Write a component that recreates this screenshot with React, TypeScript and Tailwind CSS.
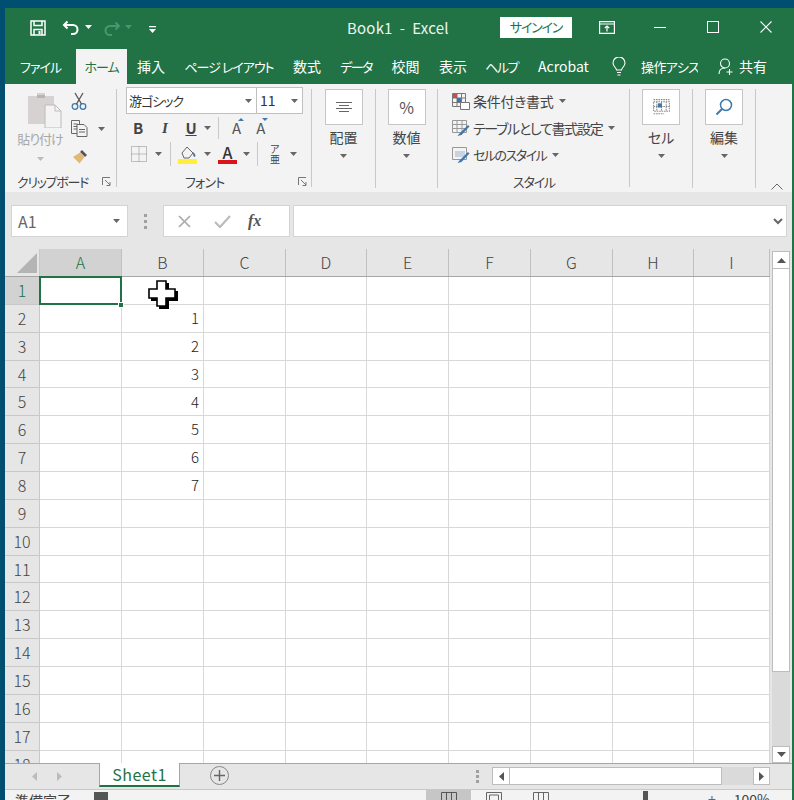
import React from "react";

const jp = { fontFamily: '"Noto Sans CJK JP", "Noto Sans", sans-serif' };

function Caret({ className = "mx-auto", color = "#666" }: { className?: string; color?: string }) {
  return (
    <svg width="7" height="4" viewBox="0 0 7 4" className={className}>
      <path d="M0 0h7L3.500 4z" fill={color} />
    </svg>
  );
}

function Launcher() {
  return (
    <svg width="9" height="9" viewBox="0 0 9 9" fill="none" stroke="#777" strokeWidth="1">
      <path d="M.5 8V.5H8M3 3l5 5M8 5v3.500H4.500" />
    </svg>
  );
}

function LargeButton({ label, icon, w }: { label: string; icon: React.ReactNode; w: string }) {
  return (
    <div className={`${w} shrink-0 border-r border-[#c8c8c8] my-[5px] flex flex-col items-center h-[99px]`}>
      <div className="w-[38px] h-[36px] bg-white border border-[#c6c6c6] flex items-center justify-center">{icon}</div>
      <div className="mt-[2px] text-[14px] leading-[20px] text-[#444]">{label}</div>
      <Caret className="mt-[7px]" />
    </div>
  );
}

function StyleRow({ icon, label, mt, text }: { icon: React.ReactNode; label: string; mt: string; text: string }) {
  return (
    <div className={`flex items-center h-[20px] ${mt}`}>
      <div className="w-[21px] shrink-0">{icon}</div>
      <span className={`${text} text-[#444] whitespace-nowrap`}>{label}</span>
      <Caret className="ml-[6px]" />
    </div>
  );
}

const tabs = [
  ["ファイル", "w-[71px]", "text-[13px] tracking-[-1px]"],
  ["ホーム", "w-[51px]", "text-[13px] tracking-[-1px]"],
  ["挿入", "w-[48px]", "text-[14px]"],
  ["ページ レイアウト", "w-[108px]", "text-[13px] tracking-[-1px]"],
  ["数式", "w-[48px]", "text-[14px]"],
  ["データ", "w-[50px]", "text-[13px] tracking-[-1.5px]"],
  ["校閲", "w-[49px]", "text-[14px]"],
  ["表示", "w-[46px]", "text-[14px]"],
  ["ヘルプ", "w-[51px]", "text-[13px] tracking-[-1.5px]"],
  ["Acrobat", "w-[73px]", "text-[14px]"],
];

const cols = [
  ["A", "w-[82px]"],
  ["B", "w-[82px]"],
  ["C", "w-[82px]"],
  ["D", "w-[81px]"],
  ["E", "w-[82px]"],
  ["F", "w-[82px]"],
  ["G", "w-[82px]"],
  ["H", "w-[81px]"],
  ["I", "w-[76px]"],
];

const rows = Array.from({ length: 18 }, (_, i) => i + 1);

function GridTable() {
  return (
    <div className="relative flex-1 min-w-0 overflow-hidden">
      <div className="flex h-[27px] bg-[#e6e6e6]">
        <div className="w-[35px] shrink-0 relative border-r border-[#c8c8c8]">
          <svg width="20" height="20" viewBox="0 0 20 20" className="absolute right-[2px] bottom-[3px]">
            <path d="M20 0v20H0z" fill="#b4b4b4" />
          </svg>
        </div>
        {cols.map(([c, w], i) => (
          <div
            key={c}
            className={`${w} shrink-0 flex items-center justify-center pb-[1px] text-[16px] font-light border-r border-[#c0c0c0] ${i === 0 ? "bg-[#d2d2d2] text-[#217346]" : "text-[#444]"}`}
          >
            {c}
          </div>
        ))}
      </div>
      <div className="h-px w-[765px] bg-[#a6a6a6]" />
      {rows.map((r) => (
        <div key={r} className="flex h-[27.86px]">
          <div
            className={`w-[35px] shrink-0 flex items-center justify-center pb-[1px] text-[16px] font-light border-r border-b border-[#c8c8c8] ${r === 1 ? "bg-[#d2d2d2] text-[#217346]" : "bg-[#e6e6e6] text-[#444]"}`}
          >
            {r}
          </div>
          {cols.map(([c, w]) => (
            <div
              key={c}
              className={`${w} shrink-0 bg-white border-r border-b border-[#d8d8d8] flex items-center justify-end pr-[4px] text-[15px] font-light text-[#222]`}
            >
              {c === "B" && r >= 2 && r <= 8 ? r - 1 : ""}
            </div>
          ))}
        </div>
      ))}
      {/* selection box */}
      <div className="absolute left-[34px] top-[27px] w-[83px] h-[29px] border-2 border-[#217346]" />
      <div className="absolute left-[113px] top-[53px] w-[6px] h-[6px] bg-[#217346] border border-white" />
      {/* cursor */}
      <svg width="32" height="32" viewBox="0 0 32 32" className="absolute left-[143px] top-[30px]">
        <path d="M9 2h10v8h9v10h-9v8H9v-8H1V10h8z" transform="translate(2 2)" fill="#000" />
        <path d="M9 2h9v8h9v9h-9v8H9v-8H1v-9h8z" fill="#fff" stroke="#000" strokeWidth="1.600" />
      </svg>
    </div>
  );
}

function VScroll() {
  return (
    <div className="w-[18px] mr-[2px] shrink-0 flex flex-col pt-[2px]">
      <div className="h-[18px] bg-white border border-[#bdbdbd] flex items-center justify-center">
        <svg width="9" height="5" viewBox="0 0 9 5"><path d="M0 5h9L4.500 0z" fill="#555" /></svg>
      </div>
      <div className="h-[403px] bg-white border-x border-b border-[#bdbdbd]" />
      <div className="flex-1 bg-[#dadada]" />
      <div className="h-[17px] bg-white border border-[#bdbdbd] flex items-center justify-center">
        <svg width="9" height="5" viewBox="0 0 9 5"><path d="M0 0h9L4.500 5z" fill="#555" /></svg>
      </div>
    </div>
  );
}

export default function App() {
  return (
    <div style={jp} className="w-[794px] h-[800px] overflow-hidden bg-[#004e70] pt-[8px] pl-[5px] flex flex-col [font-feature-settings:'palt']">
      <div className="flex-1 min-h-0 flex flex-col border-r-2 border-[#217346]">
        {/* Title bar */}
        <div className="h-[41px] shrink-0 bg-[#217346] flex items-center text-white">
          <svg width="16" height="16" viewBox="0 0 16 16" fill="none" stroke="#fff" strokeWidth="1.500" className="ml-[25px] -mt-[2px]">
            <path d="M1 1h14v14H1zM4 1v4.500h8V1M4 15V9.500h8V15" />
            <path d="M8.500 11h2v3h-2z" fill="#fff" stroke="none" />
          </svg>
          <svg width="18" height="16" viewBox="0 0 18 16" fill="none" stroke="#fff" strokeWidth="2" className="ml-[16px] -mt-[1px]">
            <path d="M5.500 1.500 2 5l3.500 3.500M2 5h9a4.500 4.500 0 0 1 0 9H9" />
          </svg>
          <Caret className="ml-[5px] -mt-[3px]" color="#fff" />
          <svg width="18" height="16" viewBox="0 0 18 16" fill="none" stroke="#4a9670" strokeWidth="2" className="ml-[11px]">
            <path d="M12.500 1.500 16 5l-3.500 3.500M16 5H7a4.500 4.500 0 0 0 0 9h2" />
          </svg>
          <Caret className="ml-[4px] -mt-[3px]" color="#4a9670" />
          <svg width="7" height="8" viewBox="0 0 7 8" className="ml-[17px] mt-[2px]">
            <path d="M0 0h7v1.200H0zM0 3h7L3.500 7z" fill="#fff" />
          </svg>
          <div className="ml-[191px] w-[153px] shrink-0 text-[15px] tracking-[0.2px] whitespace-pre text-[#eef5f0]">Book1  -  Excel</div>
          <div className="w-[72px] h-[21px] bg-white text-[#217346] text-[13px] tracking-[-1.2px] flex items-center justify-center -mt-[3px]">サインイン</div>
          <svg width="16" height="13" viewBox="0 0 16 13" fill="none" stroke="#fff" strokeWidth="1.200" className="ml-[27px] -mt-[3px]">
            <path d="M.6.600h14.800v11.800H.6zM.6 3h14.800M8 10.500V5M5.800 7 8 5l2.200 2" />
          </svg>
          <div className="ml-[39px] w-[12px] h-px bg-white -mt-[2px]" />
          <div className="ml-[41px] w-[12px] h-[12px] border border-white -mt-[4px]" />
          <svg width="12" height="12" viewBox="0 0 12 12" stroke="#fff" strokeWidth="1.100" className="ml-[41px] -mt-[4px]">
            <path d="M.5.500l11 11M11.500.500l-11 11" />
          </svg>
        </div>

        {/* Tabs */}
        <div className="h-[35px] shrink-0 bg-[#217346] flex text-[14px] text-white">
          {tabs.map(([t, w, s], i) => (
            <div
              key={t}
              className={`${w} ${s} shrink-0 flex items-center justify-center whitespace-nowrap ${i === 1 ? "bg-[#f3f3f3] text-[#217346]" : ""}`}
            >
              {t}
            </div>
          ))}
          <div className="flex items-center">
            <svg width="16" height="19" viewBox="0 0 16 19" fill="none" stroke="#fff" strokeWidth="1.100" className="ml-[11px]">
              <path d="M5.500 13c0-2-3.500-3.500-3.500-7a6 6 0 0 1 12 0c0 3.500-3.500 5-3.500 7zM6 15.500h4M6.500 18h3" />
            </svg>
            <div className="ml-[14px] w-[57px] overflow-hidden whitespace-nowrap text-[13px] tracking-[-0.6px]">操作アシスト</div>
            <svg width="16" height="18" viewBox="0 0 16 18" fill="none" stroke="#fff" strokeWidth="1.100" className="ml-[20px]">
              <circle cx="7" cy="5.500" r="4.500" />
              <path d="M1 16c0-4 2.500-6 6-6M11.500 11v6M8.500 14h6" />
            </svg>
            <span className="ml-[5px]">共有</span>
          </div>
        </div>

        {/* Ribbon */}
        <div className="h-[108px] shrink-0 bg-[#f3f3f3] flex relative text-[#444]">
          {/* Clipboard */}
          <div className="w-[112px] shrink-0 border-r border-[#c8c8c8] my-[5px] relative flex">
            <div className="w-[66px] shrink-0 flex flex-col items-center">
              <svg width="34" height="36" viewBox="0 0 34 36" className="mt-[3px] ml-[14px]">
                <path d="M0 4h9V1h8v3h9v28H0z" fill="#d6d2d2" />
                <path d="M9 3h8v3H9z" fill="#b8b4b4" />
                <path d="M17 13h10l6 6v17H17z" fill="#f3f3f3" stroke="#bdbaba" />
                <path d="M27 13v6h6" fill="none" stroke="#bdbaba" />
              </svg>
              <div className="mt-[1px] ml-[4px] text-[13px] tracking-[-1px] leading-[20px] text-[#a8a8a8] whitespace-nowrap">貼り付け</div>
              <Caret className="mt-[8px] ml-[4px]" color="#bbb" />
            </div>
            <div className="flex flex-col">
              <svg width="16" height="18" viewBox="0 0 16 18" fill="none" stroke="#3f78ab" strokeWidth="1.300" className="mt-[3px]">
                <circle cx="4" cy="14.500" r="2.800" />
                <circle cx="12" cy="14.500" r="2.800" />
                <path d="M5.500 12 12 1M10.500 12 4 1" stroke="#555" />
              </svg>
              <div className="flex items-center mt-[10px]">
                <svg width="17" height="17" viewBox="0 0 17 17" fill="none" stroke="#666" strokeWidth="1">
                  <path d="M.5.500h8v13h-8zM2.500 4h4M2.500 6.500h4M2.500 9h4" />
                  <path d="M6 4.500h7l3 3v9H6z" fill="#f3f3f3" />
                  <path d="M8 9.500h6M8 12h6" />
                </svg>
                <Caret className="ml-[10px]" />
              </div>
              <svg width="17" height="17" viewBox="0 0 17 17" className="mt-[11px] ml-[1px]">
                <path d="M10 2l5 5-2 2-5-5z" fill="#555" />
                <path d="M8 4.500l4.500 4.500-5 6.500L1 9z" fill="#e2b877" />
              </svg>
            </div>
            <div className="absolute left-[12px] bottom-[-4px] text-[13px] tracking-[-1.3px] leading-[18px] whitespace-nowrap">クリップボード</div>
            <div className="absolute right-[5px] bottom-[1px]"><Launcher /></div>
          </div>

          {/* Font */}
          <div className="w-[195px] shrink-0 border-r border-[#c8c8c8] my-[5px] relative pl-[9px]">
            <div className="flex -mt-[2px] h-[27px]">
              <div className="w-[131px] bg-white border border-[#c0c0c0] flex items-center justify-between pl-[2px] pr-[4px] text-[13px] tracking-[-1px] text-[#333]">
                游ゴシック<Caret className="" />
              </div>
              <div className="w-[46px] bg-white border border-l-0 border-[#c0c0c0] flex items-center justify-between pl-[3px] pr-[4px] text-[14px] text-[#333]">
                11<Caret className="" />
              </div>
            </div>
            <div className="flex items-center h-[26px] mt-[1px] font-bold text-[15px]">
              <span className="w-[14px] ml-[5px] text-center">B</span>
              <span className="w-[14px] ml-[13px] text-center italic" style={{ fontFamily: '"Liberation Serif", serif' }}>I</span>
              <span className="w-[14px] ml-[12px] text-center underline">U</span>
              <Caret className="ml-[6px]" />
              <div className="w-px h-[22px] bg-[#c8c8c8] ml-[7px]" />
              <span className="ml-[13px] text-[15px] font-normal text-[#555] relative">A<svg width="6" height="3" viewBox="0 0 6 3" className="absolute top-[1px] -right-[3px]"><path d="M0 3h6L3 0z" fill="#3f78ab" /></svg></span>
              <span className="ml-[15px] text-[15px] font-normal text-[#555] relative">A<svg width="6" height="3" viewBox="0 0 6 3" className="absolute top-[1px] -right-[3px]"><path d="M0 0h6L3 3z" fill="#3f78ab" /></svg></span>
            </div>
            <div className="flex items-center h-[26px]">
              <svg width="16" height="16" viewBox="0 0 16 16" fill="none" stroke="#888" strokeDasharray="1 1" className="ml-[5px]">
                <path d="M.5.500h15v15H.5zM8 .5v15M.5 8h15" />
              </svg>
              <Caret className="ml-[8px]" />
              <div className="w-px h-[24px] bg-[#c8c8c8] ml-[8px]" />
              <svg width="20" height="20" viewBox="0 0 20 20" className="ml-[7px]">
                <path d="M4 9 9 3l6 6-4 5H6z" fill="none" stroke="#666" />
                <path d="M15 8c2 2 3 3 2 5-2 0-2-3-2-5z" fill="#3f78ab" />
                <rect x="0" y="15" width="19" height="5" fill="#ffef3a" />
              </svg>
              <Caret className="ml-[6px]" />
              <div className="ml-[7px] w-[19px] flex flex-col items-center">
                <span className="text-[16px] leading-[15px] font-medium text-[#333]">A</span>
                <div className="w-[19px] h-[4px] bg-[#d9151b]" />
              </div>
              <Caret className="ml-[6px]" />
              <div className="w-px h-[24px] bg-[#c8c8c8] ml-[7px]" />
              <span className="ml-[12px] text-[10px] leading-[10px] w-[9px] text-center">ア亜</span>
              <Caret className="ml-[11px]" />
            </div>
            <div className="absolute left-[68px] bottom-[-4px] text-[13px] tracking-[-0.8px] leading-[18px]">フォント</div>
            <div className="absolute right-[4px] bottom-[1px]"><Launcher /></div>
          </div>

          <LargeButton
            w="w-[64px]"
            label="配置"
            icon={
              <svg width="16" height="10" viewBox="0 0 16 10" stroke="#666"><path d="M0 .5h16M3 3.500h10M0 6.500h16M3 9.500h10" /></svg>
            }
          />
          <LargeButton w="w-[62px]" label="数値" icon={<span className="text-[16px] text-[#555]">%</span>} />

          {/* Styles */}
          <div className="w-[192px] shrink-0 border-r border-[#c8c8c8] my-[5px] pl-[14px] relative">
            <StyleRow
              mt="mt-[2px]"
              text="text-[14px] tracking-[-0.3px]"
              label="条件付き書式"
              icon={
                <svg width="18" height="17" viewBox="0 0 18 17" fill="none" stroke="#777">
                  <path d="M.5.500h13v13H.5zM.5 5h13M.5 9.500h13M5 .5v13M9.500 .5v13" />
                  <path d="M1 1h4v4H1z" fill="#c0504d" stroke="none" />
                  <path d="M5 5h4v4H5z" fill="#4472a8" stroke="none" />
                  <path d="M8.500 9.500h9v7h-9z" fill="#fff" />
                </svg>
              }
            />
            <StyleRow
              mt="mt-[7px]"
              text="text-[14px] tracking-[-1.3px]"
              label="テーブルとして書式設定"
              icon={
                <svg width="18" height="17" viewBox="0 0 18 17" fill="none" stroke="#999">
                  <path d="M.5.500h14v12H.5zM.5 4.500h14M.5 8.500h14M5 .5v12M10 .5v12" />
                  <path d="M7 14 16 5l1.500 1.500-8 8.500-4 1z" fill="#3f78ab" stroke="none" />
                </svg>
              }
            />
            <StyleRow
              mt="mt-[7px]"
              text="text-[13px] tracking-[-1.5px]"
              label="セルのスタイル"
              icon={
                <svg width="18" height="17" viewBox="0 0 18 17" fill="none" stroke="#999">
                  <path d="M.5.500h14v12H.5z" />
                  <path d="M3 4h10v6H3z" fill="#c7d3e3" stroke="none" />
                  <path d="M7 14 16 5l1.500 1.500-8 8.500-4 1z" fill="#3f78ab" stroke="none" />
                </svg>
              }
            />
            <div className="absolute left-[75px] bottom-[-4px] text-[13px] tracking-[-1.200px] leading-[18px]">スタイル</div>
          </div>

          <LargeButton
            w="w-[63px]"
            label="セル"
            icon={
              <svg width="19" height="20" viewBox="0 0 17 19" fill="none" stroke="#888">
                <path d="M1 2.500h15M1 4.500h15v9H1zM4 4.500v9M8.500 4.500v9M13 4.500v9M1 9h15M1 16h10" strokeDasharray="1.500 .8" />
                <path d="M5 6h4v4H5z" fill="#3f78ab" stroke="none" />
              </svg>
            }
          />
          <LargeButton
            w="w-[63px]"
            label="編集"
            icon={
              <svg width="18" height="18" viewBox="0 0 18 18" fill="none">
                <circle cx="11" cy="7" r="5.500" stroke="#3f78ab" strokeWidth="1.500" />
                <path d="M7 11 1.500 16.500" stroke="#3f78ab" strokeWidth="2" />
              </svg>
            }
          />
          <svg width="12" height="7" viewBox="0 0 12 7" fill="none" stroke="#666" className="absolute right-[9px] bottom-[2px]">
            <path d="M.5 6.500 6 1l5.500 5.500" />
          </svg>
        </div>

        {/* Formula bar */}
        <div className="h-[57px] shrink-0 bg-[#e6e6e6] flex pt-[13px] pb-[12px] pl-[6px]">
          <div className="w-[117px] shrink-0 bg-white border border-[#d4d4d4] flex items-center justify-between pl-[6px] pr-[7px] text-[16px] text-[#666]">
            A1<Caret className="" />
          </div>
          <div className="w-[35px] shrink-0 flex flex-col items-center justify-center gap-[3px]">
            <i className="w-[3px] h-[3px] bg-[#a0a0a0]" />
            <i className="w-[3px] h-[3px] bg-[#a0a0a0]" />
            <i className="w-[3px] h-[3px] bg-[#a0a0a0]" />
          </div>
          <div className="w-[127px] shrink-0 bg-white border border-[#d4d4d4] flex items-center">
            <svg width="13" height="13" viewBox="0 0 13 13" stroke="#aaa" strokeWidth="1.700" className="ml-[14px]"><path d="M1 1l11 11M12 1 1 12" /></svg>
            <svg width="17" height="13" viewBox="0 0 17 13" fill="none" stroke="#bbb" strokeWidth="2.200" className="ml-[23px]"><path d="M1 7l5 5L16 1" /></svg>
            <span className="ml-[17px] text-[#555] italic font-bold text-[16px]" style={{ fontFamily: '"Liberation Serif", serif' }}>fx</span>
          </div>
          <div className="ml-[3px] w-[494px] shrink-0 bg-white border border-[#d4d4d4] flex items-center justify-end pr-[3px]">
            <svg width="10" height="7" viewBox="0 0 10 7" fill="none" stroke="#666" strokeWidth="2"><path d="M1 1l4 4 4-4" /></svg>
          </div>
        </div>

        {/* Grid */}
        <div className="flex-1 min-h-0 flex bg-[#e6e6e6] overflow-hidden">
          <GridTable />
          <VScroll />
        </div>

        {/* Sheet tab bar */}
        <div className="h-[26px] shrink-0 bg-[#e6e6e6] border-t border-[#a6a6a6] flex items-start text-[#217346]">
          <svg width="5" height="9" viewBox="0 0 5 9" className="ml-[27px] mt-[8px]"><path d="M5 0v9L0 4.500z" fill="#bbb" /></svg>
          <svg width="5" height="9" viewBox="0 0 5 9" className="ml-[20px] mt-[8px]"><path d="M0 0v9l5-4.500z" fill="#bbb" /></svg>
          <div className="ml-[37px] -mt-px w-[81px] h-[24px] bg-white border-x border-b-2 border-x-[#a6a6a6] border-b-[#217346] flex items-center justify-center text-[16px] tracking-[0.5px]">Sheet1</div>
          <div className="ml-[30px] mt-[2px] w-[19px] h-[19px] rounded-full border border-[#888] flex items-center justify-center text-[#666]">
            <svg width="11" height="11" viewBox="0 0 11 11" stroke="#666" strokeWidth="1.400"><path d="M5.500 0v11M0 5.500h11" /></svg>
          </div>
          <div className="ml-[247px] mt-[6px] flex flex-col gap-[2px]">
            <i className="w-[3px] h-[3px] bg-[#a0a0a0]" />
            <i className="w-[3px] h-[3px] bg-[#a0a0a0]" />
            <i className="w-[3px] h-[3px] bg-[#a0a0a0]" />
          </div>
          <div className="ml-[13px] mt-[3px] flex h-[18px] w-[278px]">
            <div className="w-[18px] bg-white border border-[#bdbdbd] flex items-center justify-center"><svg width="5" height="9" viewBox="0 0 5 9"><path d="M5 0v9L0 4.500z" fill="#555" /></svg></div>
            <div className="w-[212px] bg-white border-y border-r border-[#bdbdbd]" />
            <div className="w-[31px] bg-[#dadada]" />
            <div className="w-[17px] bg-white border border-[#bdbdbd] flex items-center justify-center"><svg width="5" height="9" viewBox="0 0 5 9"><path d="M0 0v9l5-4.500z" fill="#555" /></svg></div>
          </div>
        </div>

        {/* Status bar */}
        <div className="h-[11px] shrink-0 bg-[#f3f3f3] border-t border-[#c8c8c8] flex items-start text-[14px] leading-[18px] text-[#444] overflow-hidden">
          <span className="ml-[10px] w-[57px] whitespace-nowrap mt-[1px]">準備完了</span>
          <div className="ml-[22px] mt-[2px] w-[14px] h-[8px] bg-[#555]" />
          <div className="ml-[318px] w-[45px] h-[11px] bg-[#c6c6c6] flex justify-center pt-[2px]">
            <svg width="16" height="10" viewBox="0 0 16 10" fill="none" stroke="#555"><path d="M.5.500h15v9H.5zM5.500 .5v9M10.500 .5v9" /></svg>
          </div>
          <svg width="16" height="10" viewBox="0 0 16 10" fill="none" stroke="#666" className="ml-[15px] mt-[2px]"><path d="M.5.500h15v9H.5zM3.500 3h9v6h-9z" /></svg>
          <svg width="16" height="10" viewBox="0 0 16 10" fill="none" stroke="#666" className="ml-[31px] mt-[2px]"><path d="M.5.500h15v9H.5zM5.500 .5v9M10.500 .5v9" /></svg>
          <div className="ml-[94px] mt-[1px] w-[5px] h-[9px] bg-[#555]" />
          <span className="ml-[60px] text-[#666]">+</span>
          <span className="ml-[18px]">100%</span>
        </div>
      </div>
    </div>
  );
}
